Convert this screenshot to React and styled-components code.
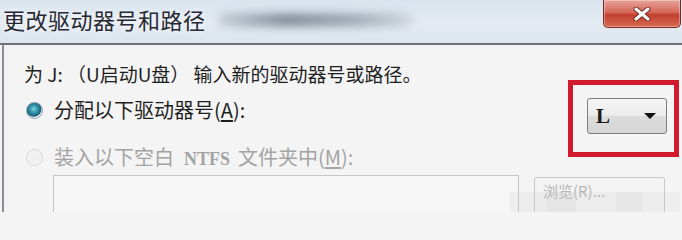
import React from 'react';
import styled, { createGlobalStyle } from 'styled-components';

const GlobalStyle = createGlobalStyle`
  html, body {
    margin: 0;
    padding: 0;
    background: #f4f4f4;
  }
  body {
    font-family: "Noto Sans CJK SC", "Noto Sans", sans-serif;
  }
`

const Window = styled.div`
  position: relative;
  width: 682px;
  height: 212px;
  overflow: hidden;
  background: #f4f4f4;
`

const TitleBar = styled.div`
  height: 43px;
  display: flex;
  align-items: flex-start;
  background: linear-gradient(180deg, #d9e4ee 0%, #e4ebf2 55%, #dbe5ee 100%);
  border-bottom: 2px solid #6c7178;
`

const Title = styled.div`
  padding: 4px 0 0 3px;
  font-size: 22px;
  line-height: 30px;
  color: #262833;
  letter-spacing: 0.5px;
  text-shadow: 0 0 6px #ffffff;
`

const Smudge = styled.div`
  margin: 13px 0 0 12px;
  width: 195px;
  height: 14px;
  border-radius: 7px;
  background: linear-gradient(90deg, rgba(120,130,145,0.25), rgba(95,105,120,0.7) 35%, rgba(110,120,135,0.55) 70%, rgba(140,150,160,0.2));
  filter: blur(4px);
`

const Spacer = styled.div`
  flex: 1;
`

const CloseButton = styled.div`
  width: 76px;
  height: 27px;
  margin-right: 1px;
  display: flex;
  align-items: center;
  justify-content: center;
  border: 1px solid #7a2a22;
  border-top: none;
  border-radius: 0 0 5px 5px;
  background: linear-gradient(180deg, #e7a298 0%, #d5695b 45%, #c2402f 55%, #d66a52 100%);
  box-shadow: inset 0 0 0 1px rgba(255,255,255,0.35);
`

const Body = styled.div`
  height: 167px;
  margin-left: 2px;
  border-left: 2px solid #8a8e94;
  padding: 17px 0 0 18px;
  display: flex;
  flex-direction: column;
  box-sizing: border-box;
  color: #222222;
  font-size: 20px;
`

const Line = styled.div`
  height: 24px;
  line-height: 24px;
  white-space: nowrap;
  color: ${p => (p.$disabled ? '#a3a3a3' : '#1e1e1e')};
`

const Instruction = styled(Line)`
  font-size: 19px;
  padding-left: 2px;
`

const OptionRow = styled.div`
  display: flex;
  align-items: flex-start;
  margin-top: ${p => p.$top}px;
`

const Radio = styled.span`
  box-sizing: border-box;
  width: 17px;
  height: 17px;
  margin: 4px 11px 0 4px;
  flex: none;
  border-radius: 50%;
  border: 1px solid ${p => (p.$checked ? '#8aa0b0' : '#d6d6d6')};
  background: ${p =>
    p.$checked
      ? 'radial-gradient(circle at 45% 40%, #7fd0e0 0%, #2f8ea6 35%, #1d5d72 60%, #e8eef2 66%, #f6f8fa 100%)'
      : 'radial-gradient(circle, #eeeeee 0%, #f4f4f4 100%)'};
`

const Accel = styled.span`
  text-decoration: underline;
  text-underline-offset: 2px;
`

const ComboWrap = styled.div`
  position: relative;
  margin-left: auto;
  margin-right: 15px;
`

const Highlight = styled.div`
  position: absolute;
  left: -19px;
  top: -18px;
  right: -12px;
  bottom: -23px;
  border: 5px solid #cf1b2b;
  pointer-events: none;
`

const Combo = styled.div`
  box-sizing: border-box;
  width: 80px;
  height: 36px;
  display: flex;
  align-items: center;
  justify-content: space-between;
  padding: 0 10px 0 8px;
  border: 1px solid #7d7d7d;
  border-radius: 3px;
  background: linear-gradient(180deg, #f6f6f6 0%, #ebebeb 50%, #dcdcdc 51%, #d6d6d6 100%);
  font-family: "Liberation Serif", "DejaVu Serif", serif;
  font-weight: bold;
  font-size: 21px;
  color: #1a1a1a;
`

const Arrow = styled.span`
  width: 0;
  height: 0;
  border-left: 6px solid transparent;
  border-right: 6px solid transparent;
  border-top: 6px solid #111111;
`

const Mono = styled.span`
  font-family: "Liberation Serif", serif;
  font-size: 18px;
  font-weight: bold;
  margin: 0 8px 0 10px;
`

const PathRow = styled.div`
  display: flex;
  align-items: flex-start;
  margin-top: 6px;
  padding-left: 31px;
`

const PathBox = styled.div`
  width: 466px;
  height: 44px;
  box-sizing: border-box;
  border: 1px solid #c6c6c6;
  border-bottom: none;
  background: #f6f6f6;
`

const Browse = styled.div`
  box-sizing: border-box;
  width: 131px;
  height: 40px;
  margin: 2px 0 0 15px;
  padding: 4px 0 0 8px;
  border: 1px solid #c9c9c9;
  border-bottom: none;
  border-radius: 3px 3px 0 0;
  background: #f3f3f3;
  color: #b6b6b6;
  font-size: 15px;
  line-height: 18px;
`

const Watermark = styled.div`
  position: absolute;
  right: 2px;
  bottom: 0;
  display: flex;
  align-items: flex-end;
  pointer-events: none;
`

const Block = styled.div`
  width: ${p => p.$w}px;
  height: ${p => p.$h}px;
  background: rgba(200, 200, 200, ${p => p.$a});
`

function CloseGlyph() {
  return (
    <svg width="18" height="14" viewBox="0 0 18 14">
      <path d="M3 2 L15 12 M15 2 L3 12" stroke="#7a2a22" strokeWidth="5" strokeLinecap="round" />
      <path d="M3 2 L15 12 M15 2 L3 12" stroke="#ffffff" strokeWidth="3" strokeLinecap="round" />
    </svg>
  )
}

export default function App() {
  return (
    <Window>
      <GlobalStyle />
      <TitleBar>
        <Title>更改驱动器号和路径</Title>
        <Smudge />
        <Spacer />
        <CloseButton>
          <CloseGlyph />
        </CloseButton>
      </TitleBar>
      <Body>
        <Instruction>为 J: （U启动U盘） 输入新的驱动器号或路径。</Instruction>
        <OptionRow $top={12}>
          <Radio $checked />
          <Line>分配以下驱动器号(<Accel>A</Accel>):</Line>
          <ComboWrap>
            <Combo>
              <span>L</span>
              <Arrow />
            </Combo>
            <Highlight />
          </ComboWrap>
        </OptionRow>
        <OptionRow $top={11}>
          <Radio />
          <Line $disabled>
            装入以下空白<Mono>NTFS</Mono>文件夹中(<Accel>M</Accel>):
          </Line>
        </OptionRow>
        <PathRow>
          <PathBox />
          <Browse>浏览(R)...</Browse>
        </PathRow>
      </Body>
      <Watermark>
        <Block $w={36} $h={20} $a={0.18} />
        <Block $w={30} $h={20} $a={0.3} />
        <Block $w={40} $h={20} $a={0.15} />
        <Block $w={26} $h={20} $a={0.28} />
        <Block $w={38} $h={20} $a={0.12} />
      </Watermark>
    </Window>
  )
}
